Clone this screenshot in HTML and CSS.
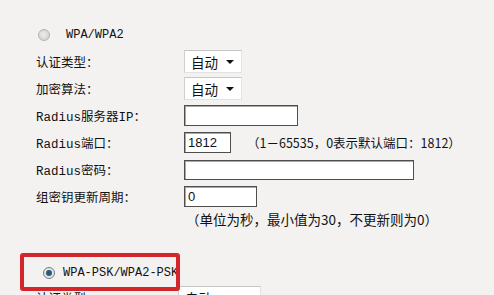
FILE: index.html
```html
<!DOCTYPE html>
<html lang="zh-CN">
<head>
    <meta charset="UTF-8">
    <meta name="viewport" content="width=device-width, initial-scale=1.0">
    <title>无线安全设置</title>
    <link rel="stylesheet" href="styles.css">
</head>
<body>

    <div class="page">
        <div class="opt opt-wpa">
            <span class="radio"></span>
            <span class="opt-name">WPA/WPA2</span>
        </div>

        <div class="form">
            <div class="label">认证类型：</div>
            <div class="ctrl"><div class="select">自动<i class="caret"></i></div></div>

            <div class="label">加密算法：</div>
            <div class="ctrl"><div class="select">自动<i class="caret"></i></div></div>

            <div class="label">Radius服务器IP：</div>
            <div class="ctrl"><input class="field w-ip" type="text"></div>

            <div class="label">Radius端口：</div>
            <div class="ctrl">
                <input class="field w-port" type="text" value="1812">
                <span class="tip">（1－65535，0表示默认端口：1812）</span>
            </div>

            <div class="label">Radius密码：</div>
            <div class="ctrl"><input class="field w-pwd" type="text"></div>

            <div class="label">组密钥更新周期：</div>
            <div class="ctrl"><input class="field w-key" type="text" value="0"></div>
        </div>

        <div class="note">（单位为秒，最小值为30，不更新则为0）</div>

        <div class="opt opt-psk">
            <span class="radio checked"></span>
            <span class="opt-name">WPA-PSK/WPA2-PSK</span>
            <div class="mark"></div>
        </div>

        <div class="form form-psk">
            <div class="label">认证类型：</div>
            <div class="ctrl"><div class="select select-wide">自动<i class="caret"></i></div></div>
        </div>
    </div>

</body>
</html>
```

FILE: styles.css
```css
body {
    margin: 0;
    background-color: #f3f2f1;
    color: #111;
    font-family: "Liberation Mono", "Noto Sans CJK SC", monospace;
    font-size: 12.5px;
    overflow: hidden;
}

.page {
    padding: 21px 0 0 36px;
}

.opt {
    display: flex;
    align-items: center;
    height: 27px;
    white-space: nowrap;
}

.opt-wpa .radio {
    margin-left: 2px;
    margin-right: 16px;
}

.opt-psk {
    position: relative;
    margin-top: 31px;
}

.opt-psk .radio {
    margin-left: 7px;
    margin-right: 8px;
}

.radio {
    width: 12px;
    height: 12px;
    box-sizing: border-box;
    border-radius: 50%;
    border: 1px solid #b3b3b3;
    background: radial-gradient(circle at 45% 45%, #ededed 0, #d2d2d2 75%);
}

.radio.checked {
    border-color: #6f7c82;
    background: radial-gradient(circle, #244f60 0, #386b7c 2.8px, #eaeef0 3.6px, #d3dadd 100%);
}

.opt-name {
    font-size: 12px;
}

/* red annotation frame drawn over the PSK option */
.mark {
    position: absolute;
    left: -16px;
    top: -6px;
    width: 160px;
    height: 38px;
    box-sizing: border-box;
    border: 4px solid #d4252b;
    border-radius: 3px;
}

.form {
    display: grid;
    grid-template-columns: 148px auto;
    grid-auto-rows: 27px;
    align-items: center;
}

.form-psk {
    margin-top: -2px;
}

.label {
    white-space: nowrap;
}

.ctrl {
    display: flex;
    align-items: center;
}

.select {
    display: flex;
    align-items: center;
    width: 58px;
    height: 23px;
    box-sizing: border-box;
    padding-left: 6px;
    background-color: #fff;
    border: 1px solid #e2e2e2;
    border-top-color: #c6c6c6;
    border-left-color: #cfcfcf;
    font-family: "Noto Sans CJK SC", sans-serif;
    font-size: 13.5px;
    color: #111;
}

.select-wide {
    width: 83px;
    margin-left: -6px;
}

.caret {
    margin-left: auto;
    margin-right: 7px;
    width: 0;
    height: 0;
    border-left: 4px solid transparent;
    border-right: 4px solid transparent;
    border-top: 4px solid #111;
}

.field {
    height: 21px;
    box-sizing: border-box;
    margin: 0;
    padding: 0 3px;
    background-color: #fff;
    border: 1px solid #4e4e4e;
    box-shadow: inset 1px 1px 0 #a9a9a9;
    font-family: "Liberation Sans", Arial, sans-serif;
    font-size: 13px;
    color: #111;
    outline: none;
}

.w-ip { width: 114px; }
.w-port { width: 47px; }
.w-pwd { width: 230px; height: 20px; }
.w-key { width: 73px; }

.tip {
    margin-left: 16px;
    font-family: "Noto Sans CJK SC", sans-serif;
    font-size: 12.5px;
    white-space: nowrap;
}

.note {
    height: 18px;
    line-height: 18px;
    margin-left: 150px;
    font-family: "Noto Sans CJK SC", sans-serif;
    font-size: 13.5px;
    white-space: nowrap;
}
```
